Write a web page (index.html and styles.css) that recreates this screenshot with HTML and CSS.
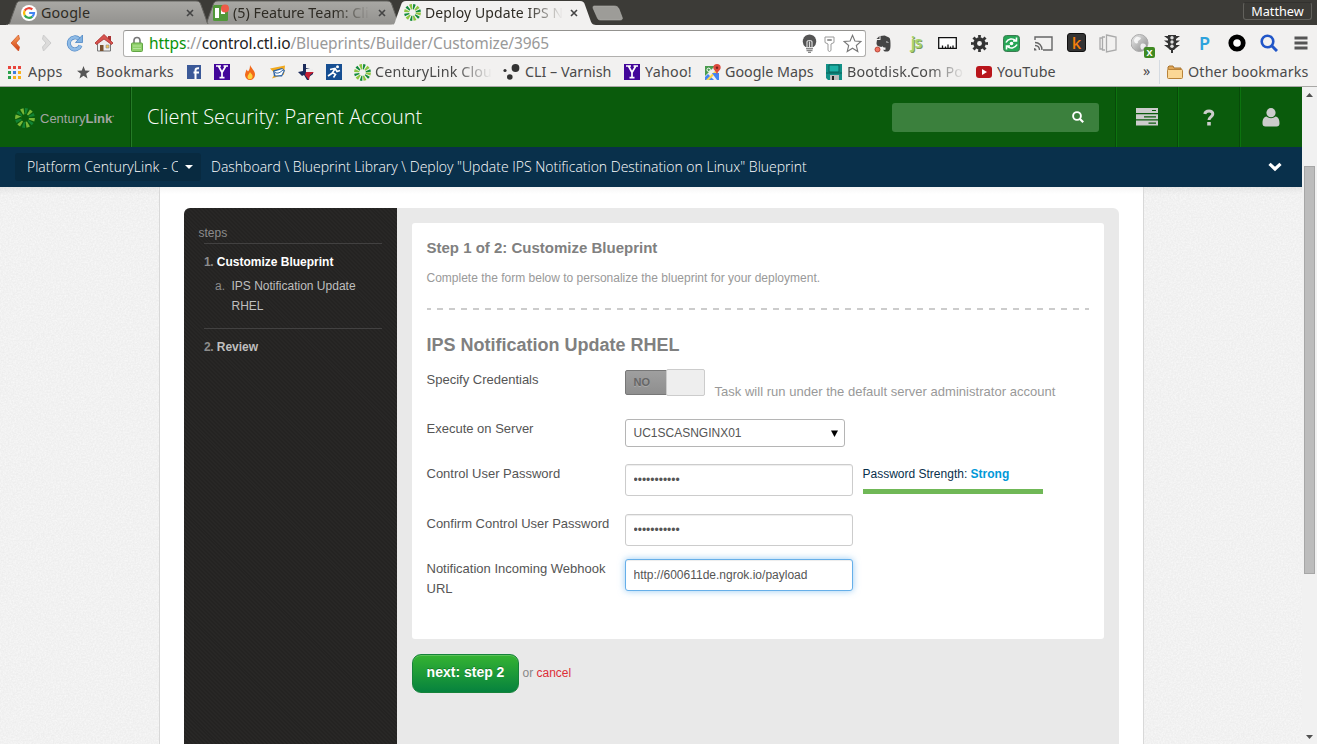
FILE: index.html
```html
<!DOCTYPE html>
<html lang="en">
<head>
<meta charset="utf-8">
<title>Deploy Update IPS Notification Destination on Linux</title>
<link rel="stylesheet" href="styles.css">
</head>
<body>
<svg class="defs" width="0" height="0">
  <defs>
    <symbol id="burst" viewBox="0 0 20 20">
      <g fill="none" stroke-width="6">
        <circle cx="10" cy="10" r="6.900" stroke="#8cc63f" pathLength="120" stroke-dasharray="7 13"/>
        <circle cx="10" cy="10" r="6.900" stroke="#128a3c" pathLength="120" stroke-dasharray="6 14" stroke-dashoffset="-10"/>
      </g>
    </symbol>
    <symbol id="yahoo" viewBox="0 0 16 16">
      <rect width="16" height="16" fill="#43069a"/>
      <path d="M2 2h5M9.500 2h4.500M4.500 2 8 8.500 11.800 2M8 8v5.500M5.500 13.700h5" fill="none" stroke="#fff" stroke-width="1.700"/>
    </symbol>
    <linearGradient id="tabfill" x2="0" y2="1"><stop stop-color="#a9a8a4"/><stop offset="1" stop-color="#92918e"/></linearGradient>
    <linearGradient id="orange" x2="0" y2="1"><stop stop-color="#f9a45c"/><stop offset="1" stop-color="#cf3b12"/></linearGradient>
    <linearGradient id="globe" x2="1" y2="1"><stop stop-color="#eee"/><stop offset="1" stop-color="#888"/></linearGradient>
  </defs>
</svg>

<header class="browser">
  <div class="tabstrip">
    <svg class="tab-shapes" width="640" height="25" viewBox="0 0 640 25">
      <path d="M203 25c4 0 4-3 5-6l5-14c1-3 2-4 5-4h169c3 0 4 1 5 4l5 14c1 3 2 6 6 6z" fill="url(#tabfill)" stroke="#63625e"/>
      <path d="M6 25c4 0 4-3 5-6l5-14c1-3 2-4 5-4h175c3 0 4 1 5 4l5 14c1 3 1 6 5 6z" fill="url(#tabfill)" stroke="#63625e"/>
      <path d="M8 24.500h385" stroke="#b9b8b4"/>
      <path d="M391 25c4 0 4-3 5-6l5-14c1-3 2-4 5-4h174c3 0 4 1 5 4l5 14c1 3 2 6 6 6z" fill="#f2f1f0"/>
      <path d="M594 6h20c3 0 4 1 5 3l3 8c1 2 0 3-2 3h-19c-3 0-3-1-4-3l-4-9c0-1 0-2 1-2z" fill="#9d9c98" stroke="#b4b3af" stroke-width=".6"/>
    </svg>
    <div class="tab tab-google">
      <svg width="16" height="16" viewBox="0 0 16 16"><circle cx="8" cy="8" r="8" fill="#fff"/><g fill="none" stroke-width="2.200"><path d="M11.300 4.400A5 5 0 0 0 3.700 5.600" stroke="#ea4335"/><path d="M3.700 5.600a5 5 0 0 0 0 4.800" stroke="#fbbc05"/><path d="M3.700 10.400a5 5 0 0 0 7.600 1.200" stroke="#34a853"/><path d="M11.300 11.600A5 5 0 0 0 13 8H8.200" stroke="#4285f4"/></g></svg>
      <span class="tab-title">Google</span><svg class="x" width="8" height="8" viewBox="0 0 8 8"><path d="M1 1l6 6M7 1 1 7"/></svg>
    </div>
    <div class="tab tab-trello">
      <svg width="18" height="18" viewBox="0 0 18 18"><rect x="1" y="1" width="15" height="16" rx="1.500" fill="#519839"/><rect x="3" y="4" width="4" height="10" fill="#fff"/><rect x="9" y="4" width="4" height="6" fill="#fff"/><circle cx="13" cy="4.500" r="4" fill="#ef5a47"/></svg>
      <span class="tab-title fade">(5) Feature Team: Cli</span><svg class="x" width="8" height="8" viewBox="0 0 8 8"><path d="M1 1l6 6M7 1 1 7"/></svg>
    </div>
    <div class="tab tab-active">
      <svg width="17" height="17"><use href="#burst"/></svg>
      <span class="tab-title fade">Deploy Update IPS N</span><svg class="x" width="8" height="8" viewBox="0 0 8 8"><path d="M1 1l6 6M7 1 1 7"/></svg>
    </div>
    <div class="profile">Matthew</div>
  </div>

  <div class="toolbar">
    <div class="nav">
      <svg width="12" height="18" viewBox="0 0 12 18"><path d="M9.500 1 2 9l7.500 8 1-4L7 9l3.500-4z" fill="url(#orange)" stroke="#cf4a1c" stroke-width=".7"/></svg>
      <svg width="12" height="18" viewBox="0 0 12 18"><path d="M2.500 1 10 9l-7.500 8-1-4L5 9 1.500 5z" fill="#dcdbda" stroke="#ccc"/></svg>
      <svg width="18" height="18" viewBox="0 0 18 18"><path d="M14.500 11.500A6 6 0 1 1 13 5" fill="none" stroke="#4d86c4" stroke-width="4"/><path d="M14.500 11.500A6 6 0 1 1 13 5" fill="none" stroke="#8fbbe6" stroke-width="2.800"/><path d="M16.500 1v7.500H9.500z" fill="#7fb0e0" stroke="#4d86c4" stroke-width=".8"/></svg>
      <svg width="20" height="20" viewBox="0 0 20 20"><path d="M14 3h3v6h-3z" fill="#a33"/><path d="M3.500 9 10 3l6.500 6v9h-13z" fill="#eee" stroke="#777"/><path d="M1 10 10 1.500 19 10l-1.500 1.500L10 6l-7.500 5.500z" fill="#d9534f" stroke="#a72f2b" stroke-width=".8"/><path d="M6 12h3.500v6H6z" fill="#79522f"/><path d="M12 12h3v3h-3z" fill="#f6c65a" stroke="#888" stroke-width=".6"/></svg>
    </div>
    <div class="address">
      <svg width="12" height="16" viewBox="0 0 12 16"><path d="M3 8V4.500a3 3 0 0 1 6 0V8" fill="none" stroke="#777" stroke-width="1.600"/><rect x=".5" y="7" width="11" height="8.500" rx="1" fill="#8fd06b" stroke="#62a545"/><path d="M2 10h8M2 12.500h8" stroke="#b4e49b"/></svg>
      <span class="url"><b>https</b>://<i>control.ctl.io</i>/Blueprints/Builder/Customize/3965</span>
      <svg class="bulb" width="15" height="19" viewBox="0 0 15 19"><path d="M7.500.5a7 7 0 0 1 4 12.500h-8a7 7 0 0 1 4-12.500z" fill="#555"/><path d="M5 13V8c0-2 5-2 5 0v5M7.500 7.500V13" fill="none" stroke="#ddd" stroke-width="1.200"/><path d="M4 14.500h7M4.500 16.500h6M6 18.400h3" stroke="#888" stroke-width="1.300"/></svg>
      <svg width="11" height="16" viewBox="0 0 11 16"><path d="M1 1h9v5.500L7 8v6.500l-1.500 1L4 14.500V8L1 6.500zM3.500 3.500h4v1h-4z" fill="#fff" stroke="#999"/></svg>
      <svg class="star" width="19" height="19" viewBox="0 0 19 19"><path d="m9.500 1.300 2.400 5.700 6.100.5-4.700 4 1.500 6-5.300-3.300-5.300 3.300 1.500-6L1 7.500l6.100-.5z" fill="#fff" stroke="#777" stroke-width="1.100"/></svg>
    </div>
    <div class="extensions">
      <span><svg width="18" height="19" viewBox="0 0 18 19"><path d="M6.500 2v4H3L2.500 9c0 3 2 3.500 5 4l1-1c0 1 1 1.500 3 1.500v2c0 1-2 0-2 0 0 2 1 2 3 2 3 0 4-2 4-6s0-7-1.500-8C12.500 2 11.500 2 10.500 1.500zM5.500 2l-3 3h3z" fill="#444"/><path d="M12 8.500c1-1.500 2-.5 2 .5" stroke="#ddd" fill="none"/><circle cx="3.500" cy="15.500" r="2.500" fill="#f27463" stroke="#aa3525" stroke-width=".8"/></svg></span>
      <span class="ext-js">js</span>
      <span><svg width="19" height="12" viewBox="0 0 19 12"><path d="M.7.700h17.600v10.600H.7zM4.500 11V8.500M7.500 11V9.500M10 11V7.500M12.500 11V9.500M15 11V8.500" fill="#fff" stroke="#111" stroke-width="1.300"/></svg></span>
      <span><svg width="17" height="17" viewBox="0 0 17 17"><circle cx="8.500" cy="8.500" r="4.300" fill="none" stroke="#333" stroke-width="3.700"/><circle cx="8.500" cy="8.500" r="7" fill="none" stroke="#333" stroke-width="3" pathLength="80" stroke-dasharray="5 5" stroke-dashoffset="2.500"/></svg></span>
      <span><svg width="17" height="17" viewBox="0 0 17 17"><rect x=".5" y=".5" width="16" height="16" rx="3" fill="#27a656" stroke="#3c7a50"/><g fill="none" stroke="#fff" stroke-width="1.600"><path d="M3 7.500c2-4 7-4.500 9.500-2M14 9.500c-2 4-7 4.500-9.500 2M13.500 2.500v3.500H10M3.500 14.500V11H7"/></g><circle cx="8.500" cy="8.500" r="1.800" fill="#fff"/></svg></span>
      <span><svg width="19" height="15" viewBox="0 0 19 15"><path d="M1 4V1h17v13H9" fill="none" stroke="#666" stroke-width="1.400"/><path d="M1 6.500c4 0 7 3 7 7.500M1 9.500c3 0 4.500 2 4.500 4.500" fill="none" stroke="#666" stroke-width="1.400"/><path d="M0 12c1.500 0 2.500 1 2.500 2.500H0z" fill="#666"/></svg></span>
      <span class="ext-k">k</span>
      <span><svg width="18" height="19" viewBox="0 0 18 19"><path d="M7.500 1 17 3v13l-9.500 2zM6 3H3.500v13H6M3.500 4H1v11h2.500" fill="none" stroke="#aaa" stroke-width="1.300"/></svg></span>
      <span class="ext-globe"><svg width="19" height="19" viewBox="0 0 19 19"><circle cx="8.500" cy="9" r="8.500" fill="url(#globe)" stroke="#aaa"/><path d="M3 6c2-5 5-3 7-2-1 3-4 2-3 5-2 1-4 0-4-3zM10 10c3-1 5 0 5 2l-4 4c-2-2-2-4-1-6z" fill="#fff" opacity=".8"/></svg><em>X</em></span>
      <span><svg width="16" height="19" viewBox="0 0 16 19"><path d="M4 1h8v13l-2 2H6l-2-2zM0 2h4v3zM16 2h-4v3zM0 6.500h4v3zM16 6.500h-4v3zM0 11h4v3zM16 11h-4v3zM7 16h2v3H7z" fill="#333"/><g fill="#ddd"><circle cx="8" cy="3.800" r="1.700"/><circle cx="8" cy="8" r="1.700"/><circle cx="8" cy="12.200" r="1.700"/></g></svg></span>
      <span class="ext-p">P</span>
      <span><svg width="18" height="18" viewBox="0 0 18 18"><circle cx="9" cy="9" r="6.200" fill="#fff" stroke="#000" stroke-width="4.800"/></svg></span>
      <span><svg width="18" height="18" viewBox="0 0 18 18"><circle cx="7.500" cy="7.500" r="5.800" fill="none" stroke="#2156c8" stroke-width="2.600"/><path d="m11.500 11.500 5.500 5.500" stroke="#2156c8" stroke-width="3"/></svg></span>
      <span><svg width="14" height="14" viewBox="0 0 14 14"><path d="M.5 2h13M.5 7h13M.5 12h13" stroke="#555" stroke-width="3"/></svg></span>
    </div>
  </div>

  <nav class="bookmarks">
    <a class="bm-apps"><svg width="13" height="13" viewBox="0 0 13 13"><path d="M0 0h3v3H0zM5 0h3v3H5zM10 0h3v3h-3z" fill="#e8453c"/><path d="M0 5h3v3H0zM0 10h3v3H0z" fill="#2ba24c"/><path d="M5 5h3v3H5z" fill="#3f7de0"/><path d="M10 5h3v3h-3zM5 10h3v3H5zM10 10h3v3h-3z" fill="#f9b21d"/></svg><span>Apps</span></a>
    <a class="bm-star"><svg width="13" height="13" viewBox="0 0 13 13"><path d="m6.500 0 1.700 4.500 4.800.2-3.800 3 1.300 4.800-4-2.800-4 2.800 1.300-4.800-3.800-3 4.800-.2z" fill="#555"/></svg><span>Bookmarks</span></a>
    <a class="bm-fb"><svg width="14" height="14" viewBox="0 0 14 14"><rect width="14" height="14" fill="#3b5998"/><path d="M8.500 14V5.500c0-1.700 1-2.500 3.500-2.200M6.500 7.500H12" stroke="#fff" stroke-width="2" fill="none"/></svg></a>
    <a class="bm-y1"><svg width="16" height="16"><use href="#yahoo"/></svg></a>
    <a class="bm-fire"><svg width="12" height="15" viewBox="0 0 12 15"><path d="M6 0c1 3 4.500 5 5 9 0 4-2.500 6-5 6s-5-2-5-5.500C1.500 7 2 6.500 2.500 4.500l1.500 2C5.500 5 6 3 6 0z" fill="#f26a1b"/><path d="M6 7c1 2 3 2.500 2.500 5-.5 3-5 3-5 0C3.500 10 5 9.500 6 7z" fill="#ffd23d"/></svg></a>
    <a class="bm-note"><svg width="16" height="14" viewBox="0 0 16 14"><path d="M0 3.500 15 .5l-1 9L2 13.500l3-5z" fill="#f1a91e"/><path d="M3 5.500 12 3l3 2.500-3 6H4z" fill="#2f65a7"/><path d="m4.500 6.500 8-2.500 1 2-2 4-6 .500z" fill="#fff"/><path d="M5 7.500c3 1.500 5 0 8-2.500" stroke="#2f65a7" fill="none"/></svg></a>
    <a class="bm-texas"><svg width="17" height="16" viewBox="0 0 17 16"><path d="M5 0h3v4l4 1h3v5l-4 3v3H9L6 11 4 12 0 8l5-1z" fill="#1b2a5a"/><path d="M8 8h8L12 11l-1 5-4-5z" fill="#c71f32"/><path d="M8 5h7v3H8z" fill="#eee"/></svg></a>
    <a class="bm-run"><svg width="16" height="16" viewBox="0 0 16 16"><rect width="16" height="16" fill="#164e92"/><circle cx="11.500" cy="2.700" r="1.500" fill="#fff"/><path d="M4 5.500 9 4.500l2 3 3-1M9 5 6.500 8.500l3 2-2 3M6.500 9l-4.500 3" fill="none" stroke="#fff" stroke-width="1.600"/></svg></a>
    <a class="bm-cl"><svg width="17" height="17"><use href="#burst"/></svg><span class="fade">CenturyLink Clou</span></a>
    <a class="bm-cli"><svg width="17" height="16" viewBox="0 0 17 16"><g fill="#333"><circle cx="12.500" cy="4" r="3.900"/><circle cx="6.800" cy="13" r="2.800"/><circle cx="2" cy="6.500" r="1.600"/></g></svg><span>CLI – Varnish</span></a>
    <a class="bm-y2"><svg width="16" height="16"><use href="#yahoo"/></svg><span>Yahoo!</span></a>
    <a class="bm-maps"><svg width="16" height="16" viewBox="0 0 16 16"><rect y="2" width="14" height="14" fill="#eee"/><path d="M0 2h10L0 12z" fill="#4a9b4f"/><path d="m0 13 3-3 6 6H0z" fill="#4285f4"/><path d="m1 16 12-12 1 2L4 16z" fill="#fbd44a"/><path d="m7 9 5 7h2V9z" fill="#4285f4"/><circle cx="3.700" cy="5.800" r="1.700" fill="none" stroke="#fff"/><path d="M12 0a3.700 3.700 0 0 1 3.700 3.700C15.700 6 12.500 7 12 11 11.500 7 8.300 6 8.300 3.700A3.700 3.700 0 0 1 12 0z" fill="#dd4b3e"/><circle cx="12" cy="3.700" r="1.200" fill="#7d231d"/></svg><span>Google Maps</span></a>
    <a class="bm-boot"><svg width="16" height="16" viewBox="0 0 16 16"><path d="M0 0h16v16H2l-2-2z" fill="#129087"/><path d="M3 1h10v7H3z" fill="#1bb0a5" stroke="#086059"/><path d="M4 11h9v5H4z" fill="#bbb"/><path d="M6 12h2v4H6z" fill="#222"/><path d="M0 9h16" stroke="#086059"/></svg><span class="fade">Bootdisk.Com Po</span></a>
    <a class="bm-yt"><svg width="16" height="12" viewBox="0 0 16 12"><rect width="16" height="12" rx="3" fill="#b9151b"/><path d="m6 3 5 3-5 3z" fill="#fff"/></svg><span>YouTube</span></a>
    <a class="bm-more"><span>»</span></a>
    <a class="bm-other"><svg width="16" height="14" viewBox="0 0 16 14"><path d="M1 12V2l1-1h4l1 2h7v9" fill="#e0a758" stroke="#a8722c"/><rect x=".5" y="4.500" width="15" height="9" rx="1" fill="#fbd795" stroke="#b98339"/></svg><span>Other bookmarks</span></a>
  </nav>
</header>

<div class="viewport">
  <div class="page">
    <div class="masthead">
      <div class="logo"><svg width="20" height="20"><use href="#burst"/></svg><span>Century<b>Link</b><sup>•</sup></span></div>
      <h1>Client Security: Parent Account</h1>
      <div class="search"><svg width="12" height="12" viewBox="0 0 12 12"><circle cx="5" cy="5" r="3.900" fill="none" stroke="#fff" stroke-width="1.900"/><path d="m8 8 3.200 3.200" stroke="#fff" stroke-width="2.200"/></svg></div>
      <div class="cell"><svg width="22" height="18" viewBox="0 0 22 18"><path d="M0 0h22v5H0zM0 6.300h22v5H0zM0 12.600h22v5H0z" fill="#ccc"/><path d="M16 2.500h4M8 8.800h12M12.500 15.100h7.500" stroke="#0a5b0c" stroke-width="1.200"/></svg></div>
      <div class="cell"><svg width="12" height="17" viewBox="0 0 12 17"><path d="M1.800 5C2.300 1 10 .8 9.800 5c0 2.700-3.800 3-3.800 6" fill="none" stroke="#ccc" stroke-width="3"/><path d="M4.200 13h3.600v3.500H4.200z" fill="#ccc"/></svg></div>
      <div class="cell"><svg width="18" height="19" viewBox="0 0 18 19"><circle cx="9" cy="4.700" r="4.600" fill="#ccc"/><path d="M4.500 8.500c3 2.300 6 2.300 9 0 3 .5 4 3 4 7 0 2-1 3-3 3h-11c-2 0-3-1-3-3 0-4 1-6.500 4-7z" fill="#ccc"/></svg></div>
    </div>
    <div class="crumbs">
      <div class="account"><span>Platform CenturyLink - C</span><svg width="8" height="4" viewBox="0 0 8 4"><path d="M0 0h8L4 4z" fill="#fff"/></svg></div>
      <p>Dashboard \ Blueprint Library \ Deploy "Update IPS Notification Destination on Linux" Blueprint</p>
      <svg class="chev" width="14" height="10" viewBox="0 0 14 10"><path d="m1.500 1.800 5.500 5.200 5.500-5.200" fill="none" stroke="#fff" stroke-width="3.200"/></svg>
    </div>
    <div class="backdrop">
      <div class="container">
        <div class="panel">
          <aside class="steps">
            <h6>steps</h6>
            <div class="step current"><i>1.</i> <b>Customize Blueprint</b>
              <div class="substep"><i>a.</i><span>IPS Notification Update RHEL</span></div>
            </div>
            <div class="step"><i>2.</i> <b>Review</b></div>
          </aside>
          <main class="main">
            <section class="card">
              <h3>Step 1 of 2: Customize Blueprint</h3>
              <p class="intro">Complete the form below to personalize the blueprint for your deployment.</p>
              <div class="dashes"></div>
              <h2>IPS Notification Update RHEL</h2>
              <div class="row row-toggle"><label>Specify Credentials</label><div class="toggle"><span>NO</span><u></u></div><span class="hint">Task will run under the default server administrator account</span></div>
              <div class="row row-select"><label>Execute on Server</label><div class="select"><span>UC1SCASNGINX01</span><svg width="7" height="7" viewBox="0 0 7 7"><path d="M0 .5h7L3.500 7z" fill="#000"/></svg></div></div>
              <div class="row row-pass"><label>Control User Password</label><input type="password" value="passw0rd123"><div class="strength">Password Strength: <b>Strong</b><div class="meter"></div></div></div>
              <div class="row row-confirm"><label>Confirm Control User Password</label><input type="password" value="passw0rd123"></div>
              <div class="row"><label>Notification Incoming Webhook URL</label><input class="focused" type="text" value="http://600611de.ngrok.io/payload"></div>
            </section>
            <div class="actions"><button>next: step 2</button><span>or <a>cancel</a></span></div>
          </main>
        </div>
      </div>
    </div>
  </div>
  <div class="scrollbar">
    <svg width="7" height="4" viewBox="0 0 7 4"><path d="M0 4h7L3.500 0z" fill="#505050"/></svg>
    <div class="thumb"></div>
    <svg class="down" width="7" height="4" viewBox="0 0 7 4"><path d="M0 0h7L3.500 4z" fill="#505050"/></svg>
  </div>
</div>
</body>
</html>
```

FILE: styles.css
```css
* { box-sizing: border-box; }
body { margin: 0; width: 1317px; height: 744px; overflow: hidden; display: flex; flex-direction: column; font-family: "Liberation Sans", Arial, sans-serif; font-size: 12px; color: #555; }
svg { flex: none; display: block; }
i, em { font-style: normal; }
.defs { position: absolute; }

/* browser chrome */
.browser { height: 87px; flex: none; background: #f2f1f0; border-bottom: 1px solid #a9a8a6; font-family: "Noto Sans", sans-serif; font-size: 14px; color: #4a4a4a; }
.tabstrip { position: relative; height: 25px; background: #3c3b37; display: flex; }
.tab-shapes { position: absolute; left: 0; top: 0; }
.tab { position: relative; display: flex; align-items: center; height: 25px; color: #2e2b24; }
.tab-title { overflow: hidden; white-space: nowrap; }
.tab .x { position: relative; stroke: #444; stroke-width: 1.6; fill: none; }
.tab-google { width: 212px; padding-left: 21px; font-size: 14.300px; }
.tab-google .tab-title { width: 145px; margin-left: 4px; letter-spacing: .15px; }
.tab-trello { width: 192px; font-size: 14.300px; }
.tab-trello .tab-title { width: 137px; margin: 0 8px 0 3px; }
.tab-active { width: 200px; }
.tab-active .tab-title { width: 138px; margin: 0 7px 0 4px; letter-spacing: .1px; }
.fade { -webkit-mask-image: linear-gradient(to left, transparent, #000 36px); mask-image: linear-gradient(to left, transparent, #000 36px); }
.profile { margin: 2px 5px 0 auto; width: 69px; height: 18px; border: 1px solid #62615c; border-top-color: #33322f; border-radius: 3px; color: #fff; font-size: 12.700px; line-height: 17px; text-align: center; }

.toolbar { height: 36px; display: flex; align-items: center; }
.nav { width: 123px; display: flex; align-items: center; padding-left: 9px; }
.nav svg:nth-child(2) { margin-left: 20px; }
.nav svg:nth-child(3) { margin-left: 13px; }
.nav svg:nth-child(4) { margin-left: 10px; }
.address { width: 743px; height: 27px; margin-top: 1px; background: #fff; border: 1px solid #b1b0ae; border-top-color: #93928f; border-radius: 3px; display: flex; align-items: center; padding: 0 3px 0 7px; }
.url { margin: -2px 0 0 6px; flex: 1; font-size: 15.500px; letter-spacing: -.1px; color: #999; white-space: nowrap; }
.url b { font-weight: 400; color: #0a930a; }
.url i { color: #222; }
.bulb { margin-right: 7px; }
.star { margin-left: 8px; }
.extensions { display: flex; margin-left: 1px; }
.extensions > span { width: 32.150px; height: 24px; display: flex; align-items: center; justify-content: center; flex: none; position: relative; }
.extensions .ext-js { font: 600 16px "Noto Sans", sans-serif; letter-spacing: -.8px; color: #a6d36c; text-shadow: 1px 1px 0 #7c9b5b; padding: 0 0 3px 2px; }
.extensions .ext-k { width: 19px; height: 19px; margin: 2px 6px 0 7.150px; background: #333; border: 1px solid #111; border-radius: 3px; color: #f57f0b; font-size: 17px; font-weight: 500; line-height: 1; }
.extensions .ext-p { color: #2da2dc; font-size: 18px; font-weight: 600; }
.ext-globe em { position: absolute; left: 20px; top: 16px; width: 11px; height: 11px; border-radius: 2px; background: #3f8a22; color: #fff; font-size: 9px; font-weight: 700; line-height: 11px; text-align: center; }

.bookmarks { display: flex; align-items: center; height: 24px; margin-top: -1px; padding-left: 8px; font-size: 14.300px; }
.bookmarks a { display: flex; align-items: center; flex: none; white-space: nowrap; height: 24px; }
.bookmarks span { overflow: hidden; line-height: 20px; }
.bm-apps { width: 69px; } .bm-apps span { margin-left: 7px; letter-spacing: .25px; }
.bm-star { width: 110px; } .bm-star span { margin-left: 6px; letter-spacing: .2px; }
.bm-fb { width: 27px; } .bm-y1 { width: 30px; } .bm-fire { width: 26px; } .bm-note { width: 28px; } .bm-texas { width: 28px; } .bm-run { width: 28px; }
.bm-cl { width: 149px; } .bm-cl span { width: 117px; margin-left: 4px; letter-spacing: .15px; }
.bm-cli { width: 121px; } .bm-cli span { margin-left: 5px; }
.bm-y2 { width: 81px; } .bm-y2 span { margin-left: 5px; letter-spacing: .25px; }
.bm-maps { width: 121px; } .bm-maps span { margin-left: 4px; }
.bm-boot { width: 150px; } .bm-boot span { width: 118px; margin-left: 5px; letter-spacing: .15px; }
.bm-yt { width: 167px; } .bm-yt span { margin-left: 5px; letter-spacing: .15px; }
.bm-more { width: 16px; } .bm-more span { margin-top: -2px; }
.bm-other { padding-left: 7px; border-left: 1px solid #d5dbe2; } .bm-other span { margin-left: 5px; letter-spacing: .15px; }

/* page */
.viewport { flex: 1; display: flex; min-height: 0; }
.page { width: 1302px; display: flex; flex-direction: column; }
.masthead { height: 60px; background: #0a5b0c; display: flex; align-items: center; flex: none; }
.logo { width: 132px; height: 60px; border-right: 1px solid #257a27; box-shadow: inset -1px 0 #074708; padding: 2px 0 0 15px; display: flex; align-items: center; color: #a3a5a3; font-size: 13px; }
.logo svg { opacity: .85; }
.logo span { margin-left: 5px; white-space: nowrap; }
.logo sup { font-size: 5px; }
h1 { margin: -2px 0 0 15px; flex: 1; font: 300 20px "Open Sans", sans-serif; color: #fff; }
.search { width: 207px; height: 29px; border-radius: 3px; background: #3b803d; margin-right: 17px; display: flex; align-items: center; justify-content: flex-end; padding-right: 15px; }
.cell { width: 62px; height: 60px; border-left: 1px solid #0c730f; box-shadow: -1px 0 #074a09; display: flex; align-items: center; justify-content: center; padding-right: 1px; }
.crumbs { height: 40px; background: #09304b; display: flex; align-items: center; flex: none; padding-left: 15px; color: #fff; font: 300 14px "Open Sans", sans-serif; }
.account { width: 186px; height: 28px; background: #082a40; border-radius: 3px; display: flex; align-items: center; padding-left: 12px; }
.account span { width: 151px; overflow: hidden; white-space: nowrap; margin: -2px 7px 0 0; }
.crumbs p { margin: -2px 0 0 10px; flex: 1; white-space: nowrap; }
.chev { margin-right: 20px; }
.backdrop { flex: 1; min-height: 0; overflow: hidden; padding-left: 159px; background: linear-gradient(rgba(0,0,0,.05), transparent 8px), url("data:image/svg+xml,%3Csvg xmlns='http://www.w3.org/2000/svg' width='200' height='200'%3E%3Cfilter id='n' x='0' y='0' width='1' height='1' color-interpolation-filters='sRGB'%3E%3CfeTurbulence type='fractalNoise' baseFrequency='.6' numOctaves='2' stitchTiles='stitch'/%3E%3CfeColorMatrix values='0 0 0 0 .5 0 0 0 0 .5 0 0 0 0 .5 .14 0 0 0 -.01'/%3E%3C/filter%3E%3Crect width='200' height='200' filter='url(%23n)'/%3E%3C/svg%3E"), #f9f9f9; }
.container { width: 985px; height: 100%; border: solid #d8d8d8; border-width: 0 1px; background: linear-gradient(#f5f5f5, #fff 7px); padding: 21px 24px 0; }
.panel { height: 600px; display: flex; border-radius: 6px 6px 0 0; overflow: hidden; background: #e9e9e9; }
.steps { width: 213px; background: repeating-linear-gradient(45deg, #242322 0 1.400px, #282726 1.400px 2.800px); padding: 15px 15px 0 20px; line-height: 20px; color: #bfbfbf; }
.steps h6 { margin: 0; padding: 0; text-indent: -5.500px; height: 21px; border-bottom: 1px solid #424141; font-size: 12px; font-weight: 400; color: #8c8c8c; }
.steps i { color: #8c8c8c; }
.step > i { font-weight: 700; letter-spacing: -.3px; }
.step { padding-top: 8px; }
.step.current { height: 85px; border-bottom: 1px solid #424141; }
.current > b { color: #fff; }
.substep { display: flex; padding: 4px 0 0 11px; }
.substep i { width: 16.500px; }
.substep span { width: 130px; }
.main { width: 722px; padding: 15px; }
.card { height: 416px; background: #fff; border-radius: 3px; padding: 15px 15px 0 14.500px; }
h3 { margin: 0; font-size: 15px; line-height: 20px; color: #808080; }
.intro { margin: 10px 0 20px; line-height: 20px; color: #999; }
.dashes { height: 2px; background: repeating-linear-gradient(90deg, #ccc 0 6px, transparent 6px 12px) -2px 0; }
h2 { margin: 24px 0 0; font-size: 18px; line-height: 22px; color: #808080; }
.row { display: flex; align-items: flex-start; font-size: 13px; line-height: 20px; color: #555; }
.row label { width: 198.500px; padding-right: 8px; }
.row-toggle { margin-top: 14px; height: 49px; }
.row-select { height: 45px; }
.row-pass { height: 50px; }
.row-confirm { height: 45px; }
.toggle { position: relative; width: 80px; height: 25px; border-radius: 2px; background: linear-gradient(#9f9f9f, #8f8f8f); border: 1px solid #777; padding-left: 7.500px; line-height: 23px; font-size: 11px; font-weight: 700; color: #666; text-shadow: 0 1px #aaa; }
.toggle u { position: absolute; right: -1px; top: -2px; width: 39px; height: 27px; background: #eee; border: 1px solid #ccc; border-radius: 2px; }
.hint { margin: 12px 0 0 9.500px; color: #999; letter-spacing: .02px; }
.select { width: 220px; height: 28px; border: 1px solid #b5b5b5; border-radius: 3px; display: flex; align-items: center; justify-content: space-between; padding: 0 6px 0 7.500px; font-size: 12px; }
.row input { width: 228px; height: 32px; border: 1px solid #ccc; border-radius: 3px; padding: 0 7.500px; font: 12px "Liberation Sans", sans-serif; color: #555; box-shadow: inset 0 1px 1px rgba(0,0,0,.075); outline: none; }
.row input.focused { border-color: #66afe9; box-shadow: inset 0 1px 1px rgba(0,0,0,.075), 0 0 7px rgba(82,168,236,.6); }
.strength { margin-left: 9.500px; width: 180px; font-size: 12px; color: #09304b; }
.strength b { color: #0099d8; }
.meter { height: 5px; margin-top: 5px; background: #70b857; }
.actions { display: flex; align-items: center; margin-top: 15px; color: #888; }
.actions span { margin-top: -2px; }
.actions button { width: 107px; height: 39px; margin-right: 3.500px; padding: 0 0 3px; border: 1px solid #16833a; border-radius: 9px; background: linear-gradient(#35b332, #06823e); box-shadow: inset 0 1px rgba(255,255,255,.2); color: #fff; font: 700 14px "Liberation Sans", sans-serif; text-shadow: 0 -1px rgba(0,0,0,.25); }
.actions a { color: #dd2f38; }

.scrollbar { width: 15px; background: #f1f1f1; display: flex; flex-direction: column; align-items: center; padding: 6px 0 5px; }
.thumb { width: 11px; height: 408px; margin-top: 69px; background: #bcbcbc; border: 1px solid #a6a6a6; }
.down { margin-top: auto; }
```
